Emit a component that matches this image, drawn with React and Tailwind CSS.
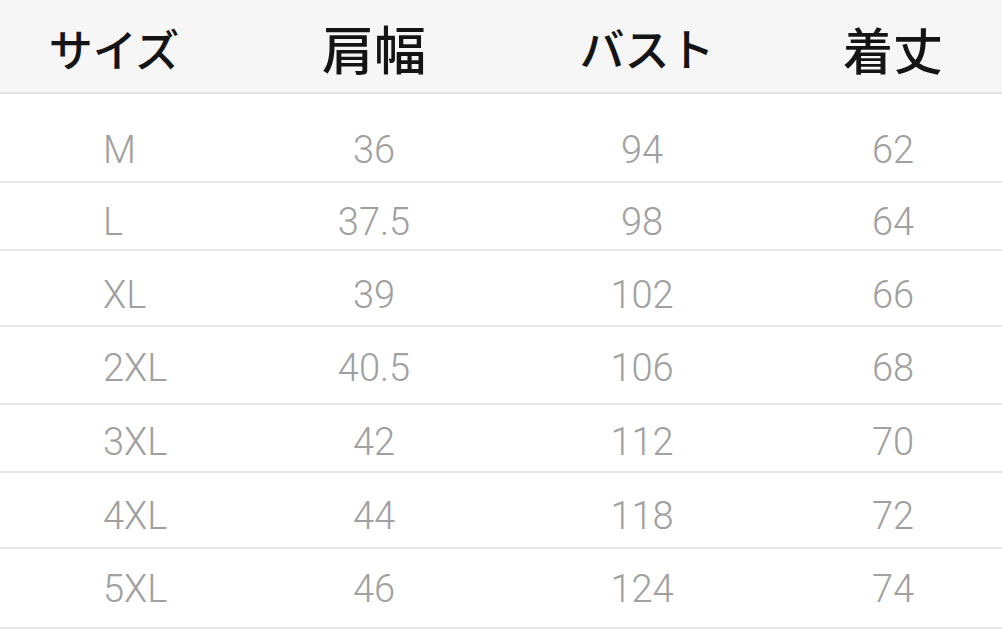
import React from "react";

const rows = [
  { s: "M", a: "36", b: "94", c: "62", h: "h-[89px]", pt: "pt-[36px]" },
  { s: "L", a: "37.5", b: "98", c: "64", h: "h-[68px]", pt: "pt-[19px]" },
  { s: "XL", a: "39", b: "102", c: "66", h: "h-[76px]", pt: "pt-[24px]" },
  { s: "2XL", a: "40.5", b: "106", c: "68", h: "h-[78px]", pt: "pt-[21px]" },
  { s: "3XL", a: "42", b: "112", c: "70", h: "h-[68px]", pt: "pt-[17px]" },
  { s: "4XL", a: "44", b: "118", c: "72", h: "h-[76px]", pt: "pt-[23px]" },
  { s: "5XL", a: "46", b: "124", c: "74", h: "h-[80px]", pt: "pt-[20px]" },
];

const grid = "grid grid-cols-[228px_292px_264px_218px]";

export default function App() {
  return (
    <div className="w-[1002px] h-[630px] bg-white overflow-hidden">
      <div
        className={`${grid} h-[94px] pt-[3px] items-center bg-[#f6f6f6] border-b-2 border-[#e4e4e4] text-[#141414] leading-none font-medium`}
        style={{ fontFamily: '"Noto Sans CJK JP", "Noto Sans", sans-serif' }}
      >
        <div className="text-center text-[44px]">サイズ</div>
        <div className="text-center text-[52px]">肩幅</div>
        <div className="text-center pr-[10px] text-[45px]">バスト</div>
        <div className="text-center text-[50px]">着丈</div>
      </div>
      {rows.map((r) => (
        <div
          key={r.s}
          className={`${grid} ${r.h} ${r.pt} items-start border-b-2 border-[#e8e8e8] text-[#a0a0a0] text-[38px] leading-[40px] font-light`}
          style={{ fontFamily: 'Roboto, "Liberation Sans", sans-serif' }}
        >
          <div className="pl-[103px]">{r.s}</div>
          <div className="text-center">{r.a}</div>
          <div className="text-center pr-[20px]">{r.b}</div>
          <div className="text-center">{r.c}</div>
        </div>
      ))}
    </div>
  );
}
